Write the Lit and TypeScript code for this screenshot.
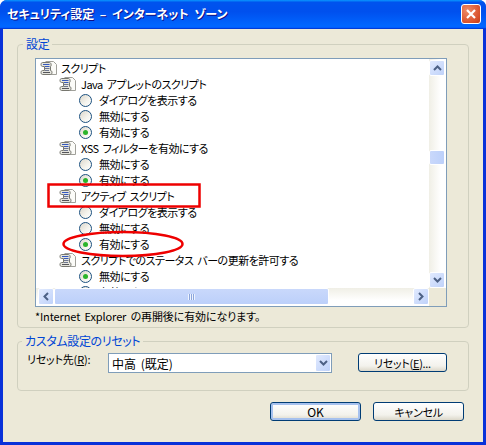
import { LitElement, html, css, svg } from "lit";
import { customElement } from "lit/decorators.js";

const scriptIcon = html`<svg class="doc" viewBox="0 0 17 16" width="17" height="16">
  <path d="M5.5 1.5H13.5L16.5 4.5V14.5H8.5V1.5" fill="#fbfbf8" stroke="#a0a09a"/>
  <path d="M2.5 2.5C.5 2.5 .5 6.5 2.5 6.5H4.5V10.5H2.5C.5 10.5 .5 14.5 2.5 14.5H10.5C12.5 14.5 12.5 10.5 10.5 10.5V6.5C11.5 6.5 11.5 2.5 9.5 2.5Z" fill="#e4e4dd" stroke="#77776f"/>
  <path d="M3 4.5H9.5M5 6.5H9.5" stroke="#3558bd" stroke-width="1"/>
  <path d="M5 8.5H9.5M5 10.5H9" stroke="#6d7690" stroke-width="1"/>
  <path d="M3 12.5H10" stroke="#55555a" stroke-width="1"/>
</svg>`;

const up = html`<svg viewBox="0 0 9 6" width="9" height="6"><path d="M1 5L4.5 1.5L8 5" fill="none" stroke="#4d6185" stroke-width="2"/></svg>`;
const down = html`<svg viewBox="0 0 9 6" width="9" height="6"><path d="M1 1L4.5 4.5L8 1" fill="none" stroke="#4d6185" stroke-width="2"/></svg>`;
const left = html`<svg viewBox="0 0 6 9" width="6" height="9"><path d="M5 1L1.5 4.5L5 8" fill="none" stroke="#4d6185" stroke-width="2"/></svg>`;
const right = html`<svg viewBox="0 0 6 9" width="6" height="9"><path d="M1 1L4.5 4.5L1 8" fill="none" stroke="#4d6185" stroke-width="2"/></svg>`;

type Row = { level: 1 | 2 | 3; text: string; checked?: boolean };
const rows: Row[] = [
  { level: 1, text: "スクリプト" },
  { level: 2, text: "Java アプレットのスクリプト" },
  { level: 3, text: "ダイアログを表示する" },
  { level: 3, text: "無効にする" },
  { level: 3, text: "有効にする", checked: true },
  { level: 2, text: "XSS フィルターを有効にする" },
  { level: 3, text: "無効にする" },
  { level: 3, text: "有効にする", checked: true },
  { level: 2, text: "アクティブ スクリプト" },
  { level: 3, text: "ダイアログを表示する" },
  { level: 3, text: "無効にする" },
  { level: 3, text: "有効にする", checked: true },
  { level: 2, text: "スクリプトでのステータス バーの更新を許可する" },
  { level: 3, text: "無効にする", checked: true },
  { level: 3, text: "有効にする" },
];

@customElement("app-root")
export class AppRoot extends LitElement {
  static styles = css`
    :host {
      display: block;
      position: relative;
      width: 486px;
      height: 445px;
      overflow: hidden;
      background: #fff;
      font-family: "Noto Sans CJK JP", "Liberation Sans", sans-serif;
      font-size: 11px;
      letter-spacing: -0.5px;
      font-feature-settings: "palt";
      word-spacing: 2px;
      color: #000;
    }
    .win {
      height: 445px;
      box-sizing: border-box;
      display: flex;
      flex-direction: column;
      background: #0831d9;
      border-radius: 7px 7px 0 0;
      overflow: hidden;
    }
    .title {
      height: 29px;
      flex: none;
      display: flex;
      align-items: center;
      justify-content: space-between;
      padding: 0 5px 2px 7px;
      box-sizing: border-box;
      background: linear-gradient(180deg, #0997ff, #0053ee 8%, #0050ee 40%, #0066ff 88%, #0066ff 93%, #005bff 95%, #003dd7 96%, #003dd7);
      color: #fff;
      font-size: 12px;
      font-weight: 700;
      letter-spacing: 0;
      word-spacing: 3px;
      text-shadow: 1px 1px 0 #0f1089;
    }
    .close {
      width: 20px;
      height: 20px;
      box-sizing: border-box;
      border: 1px solid #fff;
      border-radius: 3px;
      background: radial-gradient(circle at 30% 30%, #ef8b68, #d9512b 70%, #c13b17);
      display: flex;
      align-items: center;
      justify-content: center;
    }
    .body {
      flex: 1;
      margin: 0 3px 3px;
      background: #ece9d8;
      padding: 7px 14px 0;
      display: flex;
      flex-direction: column;
      min-height: 0;
    }
    fieldset {
      margin: 0;
      border: 1px solid #d0d0bf;
      border-radius: 4px;
      min-width: 0;
    }
    legend {
      padding: 0 3px;
      height: 16px;
      line-height: 16px;
      color: #0046d5;
      font-size: 12px;
      letter-spacing: -0.35px;
    }
    .g1 legend { margin-left: -12px; }
    .g2 legend { margin-left: -5px; }
    .g1 {
      padding: 6px 21px 0 17px;
      height: 292px;
      box-sizing: border-box;
    }
    .g2 {
      margin-top: 5px;
      padding: 4px 21px 17px 9px;
    }
    .list {
      height: 249px;
      box-sizing: border-box;
      border: 1px solid #7f9db9;
      background: #fff;
      display: grid;
      grid-template-columns: 1fr 17px;
      grid-template-rows: 1fr 18px;
    }
    .tree {
      overflow: hidden;
      padding-top: 1px;
      min-height: 0;
    }
    .row {
      height: 16px;
      display: flex;
      align-items: center;
      white-space: nowrap;
    }
    .l1 { padding-left: 4px; gap: 4px; }
    .l2 { padding-left: 23px; gap: 5px; }
    .l3 { padding-left: 43px; gap: 7px; }
    .doc { flex: none; }
    .radio {
      flex: none;
      width: 13px;
      height: 13px;
      box-sizing: border-box;
      border: 1px solid #1c5180;
      border-radius: 50%;
      background: linear-gradient(135deg, #dcd7cb, #f5f4ee 60%, #fff);
      display: flex;
      align-items: center;
      justify-content: center;
    }
    .dot {
      width: 5px;
      height: 5px;
      border-radius: 50%;
      background: #2bb42b;
    }
    .vbar {
      display: flex;
      flex-direction: column;
      padding-top: 1px;
      background: linear-gradient(90deg, #f0efe6, #fff 70%);
      min-height: 0;
    }
    .hbar {
      display: flex;
      padding-left: 2px;
      background: linear-gradient(180deg, #f0efe6, #fff 70%);
      min-width: 0;
    }
    .corner { background: #ece9d8; }
    .sb {
      box-sizing: border-box;
      flex: none;
      border: 1px solid #fff;
      border-radius: 2px;
      background: linear-gradient(135deg, #e1eafe, #bfd2fa);
      display: flex;
      align-items: center;
      justify-content: center;
    }
    .vbtn { width: 16px; height: 16px; }
    .hbtn { width: 16px; height: 17px; }
    .vthumb { width: 16px; height: 15px; margin-top: 74px; background: linear-gradient(90deg, #c9d8fb, #bcd0fa); }
    .vspace { flex: 1; }
    .hthumb { width: 275px; height: 17px; background: linear-gradient(180deg, #c9d8fb, #bcd0fa); }
    .grip {
      display: block;
      width: 7px;
      height: 6px;
      background: repeating-linear-gradient(90deg, #eef4fe 0 1px, #8ca6dc 1px 2px);
    }
    .hspace { flex: 1; }
    .note {
      height: 18px;
      line-height: 18px;
      white-space: nowrap;
      letter-spacing: -0.12px;
    }
    .resetrow {
      display: flex;
      align-items: flex-start;
    }
    .lab {
      width: 81px;
      flex: none;
      line-height: 12px;
      white-space: nowrap;
      letter-spacing: -0.2px;
    }
    u { text-underline-offset: 1px; }
    .select {
      width: 224px;
      height: 20px;
      flex: none;
      box-sizing: border-box;
      border: 1px solid #7f9db9;
      background: #fff;
      display: flex;
      align-items: center;
      justify-content: space-between;
      padding: 0 0 0 3px;
      font-size: 12px;
      letter-spacing: 0;
    }
    .select .sb { width: 16px; height: 18px; }
    .btn {
      box-sizing: border-box;
      height: 19px;
      border: 1px solid #003c74;
      border-radius: 3px;
      background: linear-gradient(180deg, #fff, #f3f2ec 70%, #dcd8ca);
      display: flex;
      align-items: center;
      justify-content: center;
      white-space: nowrap;
      flex: none;
      letter-spacing: -0.3px;
    }
    .reset { width: 89px; margin-left: 26px; }
    .foot {
      margin-top: 11px;
      display: flex;
      justify-content: flex-end;
      gap: 12px;
      padding-right: 5px;
    }
    .foot .btn { width: 91px; }
    .foot .def { font-size: 12px; letter-spacing: 0; box-shadow: inset 0 0 0 2px #a6c1ee; }
    .mark {
      position: absolute;
      left: 0;
      top: 0;
      pointer-events: none;
    }
  `;

  private row(r: Row) {
    if (r.level === 3) {
      return html`<div class="row l3"><span class="radio">${r.checked ? html`<span class="dot"></span>` : ""}</span><span>${r.text}</span></div>`;
    }
    return html`<div class="row ${r.level === 1 ? "l1" : "l2"}">${scriptIcon}<span>${r.text}</span></div>`;
  }

  render() {
    return html`
      <div class="win">
        <div class="title">
          <span>セキュリティ設定 – インターネット ゾーン</span>
          <span class="close"><svg viewBox="0 0 12 12" width="12" height="12"><path d="M2 2L10 10M10 2L2 10" stroke="#fff" stroke-width="2.2"/></svg></span>
        </div>
        <div class="body">
          <fieldset class="g1">
            <legend>設定</legend>
            <div class="list">
              <div class="tree">${rows.map((r) => this.row(r))}</div>
              <div class="vbar">
                <span class="sb vbtn">${up}</span>
                <span class="sb vthumb"></span>
                <span class="vspace"></span>
                <span class="sb vbtn">${down}</span>
              </div>
              <div class="hbar">
                <span class="sb hbtn">${left}</span>
                <span class="sb hthumb"><span class="grip"></span></span>
                <span class="hspace"></span>
                <span class="sb hbtn">${right}</span>
              </div>
              <div class="corner"></div>
            </div>
            <div class="note">*Internet Explorer の再開後に有効になります。</div>
          </fieldset>
          <fieldset class="g2">
            <legend>カスタム設定のリセット</legend>
            <div class="resetrow">
              <span class="lab">リセット先(<u>R</u>):</span>
              <div class="select"><span>中高 (既定)</span><span class="sb">${down}</span></div>
              <div class="btn reset"><span>リセット(<u>E</u>)...</span></div>
            </div>
          </fieldset>
          <div class="foot">
            <div class="btn def">OK</div>
            <div class="btn">キャンセル</div>
          </div>
        </div>
      </div>
      <svg class="mark" width="486" height="445" viewBox="0 0 486 445">
        ${svg`<rect x="48.5" y="184.5" width="151" height="22" fill="none" stroke="#ee0000" stroke-width="2.5"/>
        <ellipse cx="123" cy="244" rx="59.5" ry="12" fill="none" stroke="#ee0000" stroke-width="2.5"/>`}
      </svg>
    `;
  }
}
